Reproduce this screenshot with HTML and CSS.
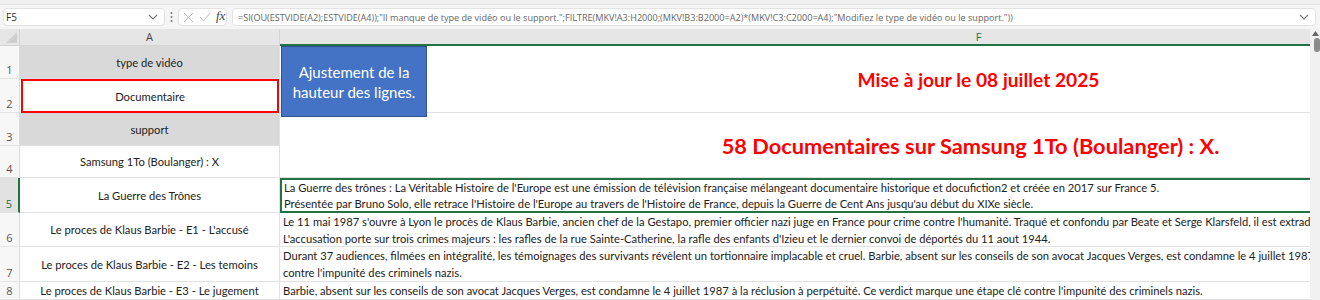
FILE: index.html
```html
<!DOCTYPE html>
<html lang="fr">
<head>
    <meta charset="UTF-8">
    <title>Documentaires</title>
    <link rel="stylesheet" href="styles.css">
</head>
<body>
    <div class="top-strip"></div>
    <!-- formula bar -->
    <div class="toolbar">
        <div class="name-box">
            <span>F5</span>
            <svg width="10" height="6" viewBox="0 0 10 6"><path d="M1 1l4 4 4-4" fill="none" stroke="#777" stroke-width="1.1"/></svg>
        </div>
        <svg class="grip" width="3" height="12" viewBox="0 0 3 12"><circle cx="1.5" cy="2" r="1" fill="#777"/><circle cx="1.5" cy="6" r="1" fill="#777"/><circle cx="1.5" cy="10" r="1" fill="#777"/></svg>
        <div class="fx-box">
            <svg width="11" height="11" viewBox="0 0 11 11"><path d="M1 1l9 9M10 1l-9 9" stroke="#bbb" stroke-width="1"/></svg>
            <svg width="12" height="10" viewBox="0 0 12 10"><path d="M1 5l3.5 4L11 1" fill="none" stroke="#bbb" stroke-width="1"/></svg>
            <span class="fx">fx</span>
        </div>
        <div class="formula">
            <span>=SI(OU(ESTVIDE(A2);ESTVIDE(A4));"Il manque de type de vidéo ou le support.";FILTRE(MKV!A3:H2000;(MKV!B3:B2000=A2)*(MKV!C3:C2000=A4);"Modifiez le type de vidéo ou le support."))</span>
            <svg width="10" height="6" viewBox="0 0 10 6"><path d="M1 1l4 4 4-4" fill="none" stroke="#777" stroke-width="1.1"/></svg>
        </div>
    </div>

    <!-- sheet -->
    <div class="sheet">
        <div class="grid-wrap">
            <div class="grid">
                <div class="corner"><span class="tri"></span></div>
                <div class="col-head">A</div>
                <div class="col-head active">F</div>

                <div class="row-head">1</div>
                <div class="cell center grey">type de vidéo</div>
                <div class="cell center title span2">Mise à jour le 08 juillet 2025</div>

                <div class="row-head">2</div>
                <div class="cell center picked">Documentaire</div>

                <div class="row-head">3</div>
                <div class="cell center grey">support</div>
                <div class="cell center title big span2">58 Documentaires sur Samsung 1To (Boulanger) : X.</div>

                <div class="row-head">4</div>
                <div class="cell center">Samsung 1To (Boulanger) : X</div>

                <div class="row-head active">5</div>
                <div class="cell center">La Guerre des Trônes</div>
                <div class="cell text current">La Guerre des trônes : La Véritable Histoire de l'Europe est une émission de télévision française mélangeant documentaire historique et docufiction2 et créée en 2017 sur France 5.<br>Présentée par Bruno Solo, elle retrace l'Histoire de l'Europe au travers de l'Histoire de France, depuis la Guerre de Cent Ans jusqu'au début du XIXe siècle.</div>

                <div class="row-head">6</div>
                <div class="cell center">Le proces de Klaus Barbie - E1 - L'accusé</div>
                <div class="cell text">Le 11 mai 1987 s'ouvre à Lyon le procès de Klaus Barbie, ancien chef de la Gestapo, premier officier nazi juge en France pour crime contre l'humanité. Traqué et confondu par Beate et Serge Klarsfeld, il est extradé de Bolivie.<br>L'accusation porte sur trois crimes majeurs : les rafles de la rue Sainte-Catherine, la rafle des enfants d'Izieu et le dernier convoi de déportés du 11 aout 1944.</div>

                <div class="row-head">7</div>
                <div class="cell center">Le proces de Klaus Barbie - E2 - Les temoins</div>
                <div class="cell text">Durant 37 audiences, filmées en intégralité, les témoignages des survivants révèlent un tortionnaire implacable et cruel. Barbie, absent sur les conseils de son avocat Jacques Verges, est condamne le 4 juillet 1987 à la réclusion à perpétuité. Ce verdict marque une étape clé<br>contre l'impunité des criminels nazis.</div>

                <div class="row-head">8</div>
                <div class="cell center">Le proces de Klaus Barbie - E3 - Le jugement</div>
                <div class="cell text">Barbie, absent sur les conseils de son avocat Jacques Verges, est condamne le 4 juillet 1987 à la réclusion à perpétuité. Ce verdict marque une étape clé contre l'impunité des criminels nazis.</div>
            </div>
            <div class="shape">Ajustement de la hauteur des lignes.</div>
        </div>
        <div class="scrollbar">
            <svg width="7" height="5" viewBox="0 0 7 5"><path d="M0 5L3.5 0 7 5z" fill="#666"/></svg>
            <div class="thumb"></div>
        </div>
    </div>
</body>
</html>
```

FILE: styles.css
```css
body {
    margin: 0;
    width: 1320px;
    height: 300px;
    overflow: hidden;
    background: #f5f5f5;
    font-family: Lato, "Liberation Sans", sans-serif;
    color: #222;
}
.top-strip {
    height: 4px;
    background: #efefef;
    border-bottom: 1px solid #e2e2e2;
}
.toolbar {
    display: flex;
    align-items: center;
    height: 24px;
    padding: 0 4px 0 3px;
    font-family: "Open Sans", "Noto Sans", sans-serif;
}
.name-box, .fx-box, .formula {
    height: 16px;
    background: #fff;
    border: 1px solid #e2e2e2;
    border-radius: 4px;
    display: flex;
    align-items: center;
    flex-shrink: 0;
}
.name-box {
    width: 152px;
    padding: 0 6px 0 2px;
    justify-content: space-between;
    font-size: 10px;
    color: #333;
}
.grip {
    margin-left: 5px;
    flex-shrink: 0;
}
.fx-box {
    width: 43px;
    margin-left: 5px;
    padding-left: 4px;
    gap: 5px;
}
.fx {
    font-family: "Liberation Serif", serif;
    font-style: italic;
    font-size: 13px;
    color: #444;
    margin-top: -2px;
}
.formula {
    flex: 1 1 auto;
    min-width: 0;
    overflow: hidden;
    margin-left: 5px;
    padding: 0 6px 0 5px;
    justify-content: space-between;
    font-size: 9.1px;
    color: #666;
    white-space: nowrap;
}
.sheet {
    display: flex;
    height: 271px;
    background: #fff;
}
.grid-wrap {
    position: relative;
    width: 1310px;
    overflow: hidden;
}
.grid {
    display: grid;
    grid-template-columns: 20px 260px 1398px;
    grid-template-rows: 17px 33px 34px 33px 32px 35px 34px 35px 18px;
    font-size: 11.2px;
}
.corner {
    background: #e6e6e6;
    border-right: 1px solid #d4d4d4;
    border-bottom: 1px solid #d4d4d4;
    position: relative;
}
.tri {
    position: absolute;
    right: 2px;
    bottom: 2px;
    border-left: 11px solid transparent;
    border-bottom: 11px solid #cfcfcf;
}
.col-head {
    background: #e6e6e6;
    border-right: 1px solid #d4d4d4;
    border-bottom: 1px solid #d4d4d4;
    text-align: center;
    font-family: "Open Sans", "Noto Sans", sans-serif;
    font-size: 11px;
    line-height: 16px;
    color: #444;
}
.col-head.active {
    color: #217346;
    border-bottom: 2px solid #217346;
}
.row-head {
    background: #f7f7f7;
    border-right: 1px solid #dcdcdc;
    border-bottom: 1px solid #e4e4e4;
    display: flex;
    align-items: flex-end;
    justify-content: center;
    padding-bottom: 1px;
    font-family: "Open Sans", "Noto Sans", sans-serif;
    font-size: 11px;
    color: #555;
}
.row-head.active {
    background: #e2e2e2;
    color: #217346;
    border-right: 2px solid #217346;
}
.cell {
    border-right: 1px solid #e1e1e1;
    border-bottom: 1px solid #e1e1e1;
    overflow: hidden;
}
.center {
    display: flex;
    align-items: center;
    justify-content: center;
    white-space: nowrap;
}
.grey {
    background: #d9d9d9;
}
.picked {
    border: 2px solid #f00;
    margin: 0 1px 0 1px;
}
.span2 {
    grid-row: span 2;
}
.title {
    font-size: 19.2px;
    font-weight: bold;
    color: #f00;
}
.title.big {
    font-size: 21.8px;
    padding-right: 16px;
}
.text {
    padding: 0 3px;
    line-height: 17px;
    white-space: nowrap;
}
.current {
    border: 2px solid #217346;
    padding: 0 2px;
    line-height: 16px;
}
.shape {
    position: absolute;
    left: 281px;
    top: 17px;
    width: 146px;
    height: 71px;
    box-sizing: border-box;
    background: #4472c4;
    border: 1px solid #2f528f;
    color: #fff;
    font-size: 15px;
    line-height: 20px;
    display: flex;
    align-items: center;
    justify-content: center;
    text-align: center;
    padding: 0 8px;
}
.scrollbar {
    width: 10px;
    background: #f1f1f1;
    display: flex;
    flex-direction: column;
    align-items: flex-end;
    padding-top: 2px;
    gap: 2px;
}
.scrollbar svg {
    margin-right: 1px;
}
.thumb {
    width: 6px;
    height: 14px;
    background: #8a8a8a;
    border-radius: 3px;
}
```
